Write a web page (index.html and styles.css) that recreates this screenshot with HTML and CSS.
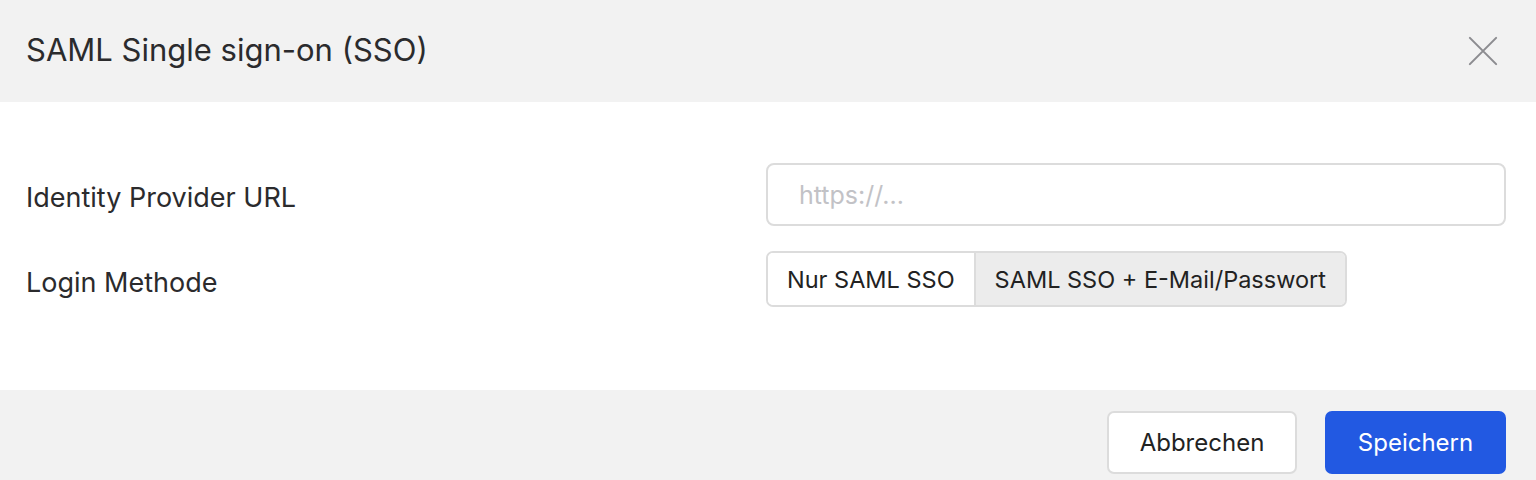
FILE: index.html
```html
<!DOCTYPE html>
<html lang="de">
<head>
    <meta charset="UTF-8">
    <meta name="viewport" content="width=device-width, initial-scale=1.0">
    <title>SAML Single sign-on (SSO)</title>
    <link rel="stylesheet" href="styles.css">
</head>
<body>
    <div class="modal">
        <div class="modal-header">
            <h2 class="modal-title">SAML Single sign-on (SSO)</h2>
            <button class="close-btn" aria-label="Schließen">
                <svg width="32" height="32" viewBox="0 0 32 32" fill="none" stroke="currentColor" stroke-width="2.2" stroke-linecap="round">
                    <path d="M2 2 L30 30 M30 2 L2 30"/>
                </svg>
            </button>
        </div>

        <div class="modal-body">
            <div class="form-row">
                <label class="form-label" for="idpUrl">Identity Provider URL</label>
                <input class="form-input" id="idpUrl" type="text" placeholder="https://...">
            </div>
            <div class="form-row">
                <span class="form-label">Login Methode</span>
                <div class="segmented">
                    <button class="segment">Nur SAML SSO</button>
                    <button class="segment active">SAML SSO + E-Mail/Passwort</button>
                </div>
            </div>
        </div>

        <div class="modal-footer">
            <button class="btn btn-secondary">Abbrechen</button>
            <button class="btn btn-primary">Speichern</button>
        </div>
    </div>
</body>
</html>
```

FILE: styles.css
```css
:root {
    --gray-bg: #f2f2f2;
    --border: #dcdcdc;
    --text: #2b2b2d;
    --primary: #2259e2;
}

body {
    margin: 0;
    font-family: 'Inter', 'Noto Sans', sans-serif;
    color: var(--text);
    background: #ffffff;
}

.modal {
    display: flex;
    flex-direction: column;
    height: 480px;
}

.modal-header {
    display: flex;
    align-items: center;
    justify-content: space-between;
    height: 102px;
    padding: 0 38px 3px 26px;
    background: var(--gray-bg);
    box-sizing: border-box;
}

.modal-title {
    margin: 0;
    font-size: 31px;
    font-weight: 400;
}

.close-btn {
    display: flex;
    padding: 3px 0 0;
    border: none;
    background: none;
    color: #8c8c90;
    cursor: pointer;
}

.close-btn svg {
    width: 30px;
    height: 30px;
}

.modal-body {
    flex: 1;
    display: flex;
    flex-direction: column;
    gap: 25px;
    padding: 61px 30px 0 26px;
}

.form-row {
    display: grid;
    grid-template-columns: 1fr 1fr;
    align-items: center;
}

.form-label {
    font-size: 27px;
    padding-top: 6px;
}

.form-input {
    height: 63px;
    box-sizing: border-box;
    padding: 0 31px;
    border: 2px solid var(--border);
    border-radius: 8px;
    font-family: inherit;
    font-size: 25px;
    color: var(--text);
    outline: none;
}

.form-input::placeholder {
    color: #c2c2c6;
}

.segmented {
    display: flex;
    justify-self: start;
    border: 2px solid var(--border);
    border-radius: 7px;
    overflow: hidden;
}

.segment {
    height: 52px;
    padding: 0 19px;
    border: none;
    background: #ffffff;
    font-family: inherit;
    font-size: 23.5px;
    color: #222;
    cursor: pointer;
}

.segment + .segment {
    border-left: 2px solid var(--border);
}

.segment.active {
    background: #ececec;
}

.modal-footer {
    display: flex;
    justify-content: flex-end;
    gap: 28px;
    height: 90px;
    padding: 21px 30px 0 0;
    box-sizing: border-box;
    background: var(--gray-bg);
}

.btn {
    height: 63px;
    box-sizing: border-box;
    border-radius: 7px;
    font-family: inherit;
    font-size: 24px;
    cursor: pointer;
}

.btn-secondary {
    width: 190px;
    background: #ffffff;
    border: 2px solid var(--border);
    color: #222;
}

.btn-primary {
    width: 181px;
    background: var(--primary);
    border: none;
    color: #ffffff;
}
```
